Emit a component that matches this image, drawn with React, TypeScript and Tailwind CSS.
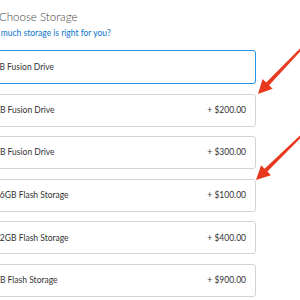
import React from "react";

const options = [
  { name: "1TB Fusion Drive", price: "", selected: true },
  { name: "2TB Fusion Drive", price: "+ $200.00", selected: false },
  { name: "3TB Fusion Drive", price: "+ $300.00", selected: false },
  { name: "256GB Flash Storage", price: "+ $100.00", selected: false },
  { name: "512GB Flash Storage", price: "+ $400.00", selected: false },
  { name: "1TB Flash Storage", price: "+ $900.00", selected: false },
];

function arrowPoints(x1: number, y1: number, x2: number, y2: number): string {
  const dx = x2 - x1;
  const dy = y2 - y1;
  const len = Math.hypot(dx, dy);
  const ux = dx / len;
  const uy = dy / len;
  const nx = -uy;
  const ny = ux;
  const hl = 14;
  const hw = 7;
  const bx = x2 - hl * ux;
  const by = y2 - hl * uy;
  const pts: number[][] = [
    [x1 + nx, y1 + ny],
    [bx + nx * 2, by + ny * 2],
    [bx + nx * hw, by + ny * hw],
    [x2, y2],
    [bx - nx * hw, by - ny * hw],
    [bx - nx * 2, by - ny * 2],
    [x1 - nx, y1 - ny],
  ];
  return pts.map((p) => p[0].toFixed(1) + "," + p[1].toFixed(1)).join(" ");
}

export default function App() {
  return (
    <div
      className="relative w-[300px] h-[300px] overflow-hidden bg-white"
      style={{ fontFamily: "Lato, 'Open Sans', Arial, sans-serif" }}
    >
      <div className="pt-[10px] -ml-[1px] text-[11.5px] leading-[14px] font-light text-[#444]">Choose Storage</div>
      <div className="mt-[4px] -ml-[19px] text-[8.5px] leading-[11px] text-[#0a74cc]">
        How much storage is right for you?
      </div>
      <div className="flex flex-col gap-[9.6px] mt-[11px] -ml-[24px] w-[280px]">
        {options.map((o) => (
          <div
            key={o.name}
            className={
              o.selected
                ? "h-[34px] rounded-[3px] border-[1.5px] border-[#2196e3] flex items-center justify-between pl-[12.5px] pr-[9px] text-[8.5px] text-[#333]"
                : "h-[33px] rounded-[3px] border border-[#d4d4d4] flex items-center justify-between pl-[13px] pr-[9px] text-[8.5px] text-[#333]"
            }
          >
            <span>{o.name}</span>
            <span>{o.price}</span>
          </div>
        ))}
      </div>
      <svg className="absolute left-0 top-0" width="300" height="300" viewBox="0 0 300 300">
        <polygon points={arrowPoints(303, 47, 258, 94)} fill="#e8391f" />
        <polygon points={arrowPoints(303, 134, 256, 180)} fill="#e8391f" />
      </svg>
    </div>
  );
}
